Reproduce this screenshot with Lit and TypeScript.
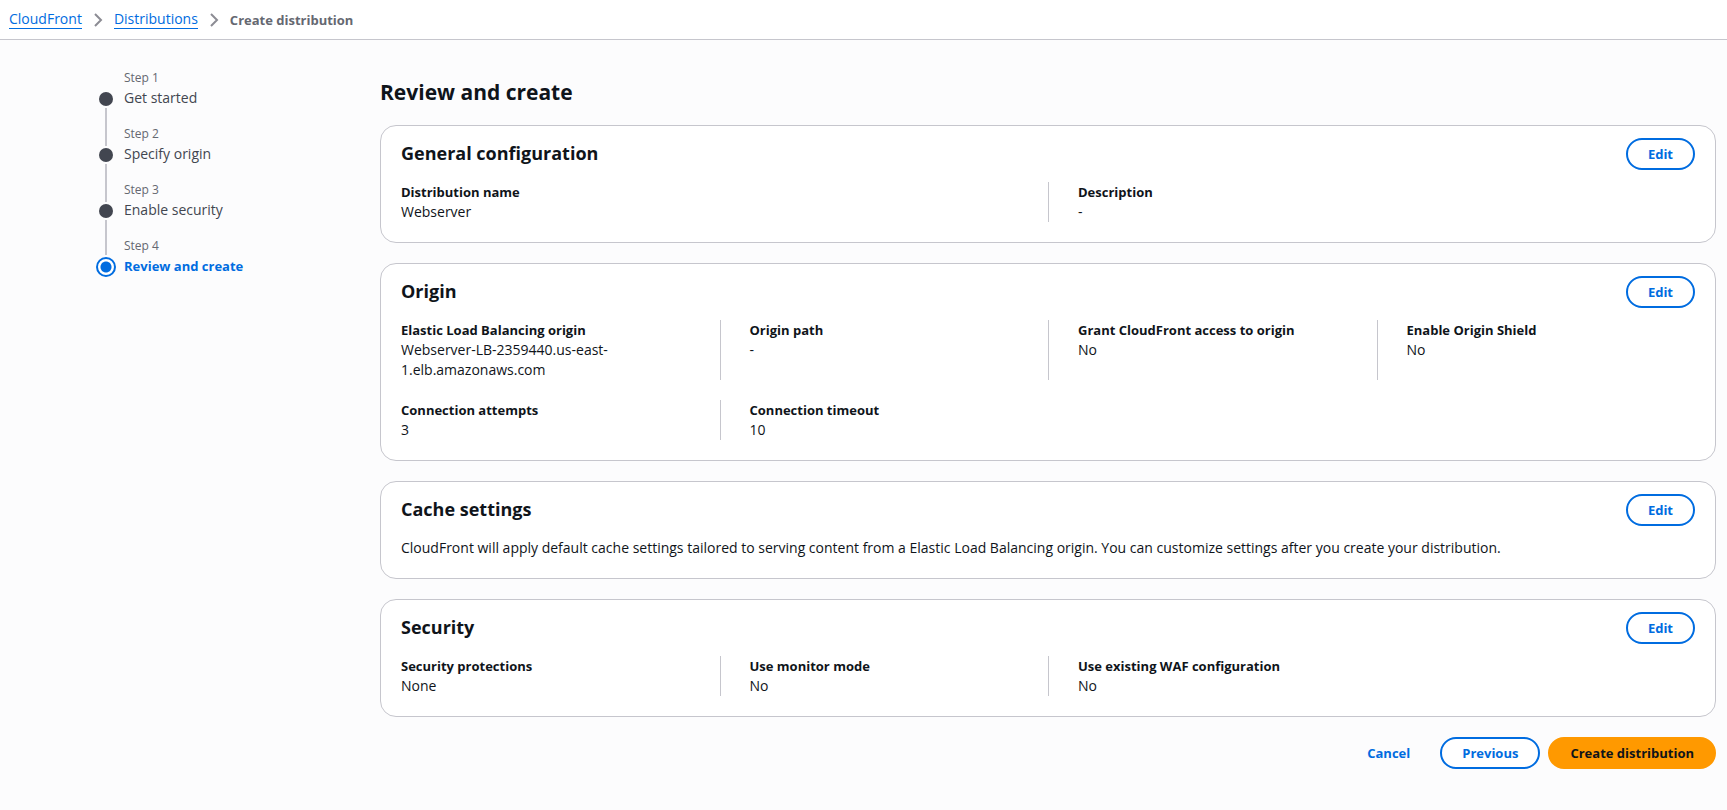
import { LitElement, html, css, nothing } from "lit";
import { customElement, property } from "lit/decorators.js";
import { classMap } from "lit/directives/class-map.js";

interface Field {
  label: string;
  value: string;
}

interface Section {
  title: string;
  columns?: 2 | 4;
  fields?: Field[];
  text?: string;
}

const STEPS = ["Get started", "Specify origin", "Enable security", "Review and create"];

const SECTIONS: Section[] = [
  {
    title: "General configuration",
    columns: 2,
    fields: [
      { label: "Distribution name", value: "Webserver" },
      { label: "Description", value: "-" },
    ],
  },
  {
    title: "Origin",
    columns: 4,
    fields: [
      { label: "Elastic Load Balancing origin", value: "Webserver-LB-2359440.us-east-1.elb.amazonaws.com" },
      { label: "Origin path", value: "-" },
      { label: "Grant CloudFront access to origin", value: "No" },
      { label: "Enable Origin Shield", value: "No" },
      { label: "Connection attempts", value: "3" },
      { label: "Connection timeout", value: "10" },
    ],
  },
  {
    title: "Cache settings",
    text: "CloudFront will apply default cache settings tailored to serving content from a Elastic Load Balancing origin. You can customize settings after you create your distribution.",
  },
  {
    title: "Security",
    columns: 4,
    fields: [
      { label: "Security protections", value: "None" },
      { label: "Use monitor mode", value: "No" },
      { label: "Use existing WAF configuration", value: "No" },
    ],
  },
];

const buttonStyles = css`
  .button {
    box-sizing: border-box;
    height: 32px;
    padding: 0 20px;
    border: 2px solid #006ce0;
    border-radius: 20px;
    background: #ffffff;
    color: #006ce0;
    font: 700 13px/20px "Open Sans", "Noto Sans", sans-serif;
    white-space: nowrap;
    cursor: pointer;
  }
  .button.link {
    border-color: transparent;
    background: transparent;
  }
  .button.primary {
    border-color: #ff9900;
    background: #ff9900;
    color: #0f141a;
  }
`;

@customElement("review-card")
export class ReviewCard extends LitElement {
  @property({ attribute: false }) section!: Section;

  static styles = [
    buttonStyles,
    css`
      :host {
        display: block;
      }
      .card {
        padding: 12px 20px 20px;
        border: 1px solid #c6c6cd;
        border-radius: 16px;
        background: #ffffff;
      }
      .head {
        display: flex;
        justify-content: space-between;
        align-items: flex-start;
        margin-bottom: 12px;
      }
      .title {
        margin: 0;
        padding-top: 3px;
        font-size: 18px;
        line-height: 24px;
        font-weight: 700;
      }
      .text {
        margin: 0;
      }
      .fields {
        display: grid;
        row-gap: 20px;
        margin: 0 -10px;
      }
      .two {
        grid-template-columns: repeat(2, 1fr);
      }
      .four {
        grid-template-columns: repeat(4, 1fr);
      }
      .field {
        min-width: 0;
        padding: 0 20px 0 29px;
        border-left: 1px solid #c6c6cd;
      }
      .two .field:nth-child(2n + 1),
      .four .field:nth-child(4n + 1) {
        padding-left: 10px;
        border-left: 0;
      }
      .label {
        font-size: 13px;
        font-weight: 700;
      }
      .value {
        margin: 0;
        overflow-wrap: break-word;
      }
    `,
  ];

  render() {
    const { title, columns, fields, text } = this.section;
    return html`
      <section class="card" aria-label=${title}>
        <div class="head">
          <h2 class="title">${title}</h2>
          <button class="button" type="button">Edit</button>
        </div>
        ${text ? html`<p class="text">${text}</p>` : nothing}
        ${fields
          ? html`<dl class=${classMap({ fields: true, two: columns === 2, four: columns === 4 })}>
              ${fields.map(
                (f) => html`<div class="field">
                  <dt class="label">${f.label}</dt>
                  <dd class="value">${f.value}</dd>
                </div>`,
              )}
            </dl>`
          : nothing}
      </section>
    `;
  }
}

@customElement("app-root")
export class AppRoot extends LitElement {
  static styles = [
    buttonStyles,
    css`
      :host {
        display: block;
        box-sizing: border-box;
        min-height: 100vh;
        background: #fcfcfd;
        color: #0f141a;
        font: 14px/20px "Open Sans", "Noto Sans", sans-serif;
      }
      .crumbs {
        padding: 9px;
        border-bottom: 1px solid #c6c6cd;
        background: #ffffff;
      }
      .crumb-list {
        display: flex;
        align-items: center;
        gap: 8px;
        height: 21px;
        margin: 0;
        padding: 0;
        list-style: none;
      }
      .crumb {
        display: flex;
        align-items: center;
        gap: 8px;
      }
      .crumb-link {
        color: #006ce0;
        text-decoration: none;
        border-bottom: 1px solid #006ce0;
        line-height: 18px;
      }
      .current {
        color: #656871;
        font-size: 13px;
        line-height: 18px;
        font-weight: 700;
      }
      .chevron {
        width: 16px;
        height: 16px;
        fill: none;
        stroke: #8c8c94;
        stroke-width: 2;
      }
      .layout {
        display: grid;
        grid-template-columns: 264px minmax(0, 1fr);
        gap: 20px;
        padding: 29px 11px 41px 96px;
      }
      .steps {
        margin: 0;
        padding: 0;
        list-style: none;
      }
      .step {
        display: grid;
        grid-template-columns: 20px 1fr;
        grid-template-rows: 20px 20px 16px;
        column-gap: 8px;
        justify-items: start;
        line-height: 18px;
      }
      .step-number {
        grid-area: 1 / 2;
        color: #656871;
        font-size: 12px;
      }
      .step-link {
        grid-area: 2 / 2;
        color: #424650;
        text-decoration: none;
      }
      .marker {
        grid-area: 2 / 1;
        place-self: center;
        width: 14px;
        height: 14px;
        border-radius: 50%;
        background: #424650;
      }
      .line {
        justify-self: center;
        width: 2px;
        background: #c6c6cd;
      }
      .before {
        grid-area: 1 / 1;
        margin-bottom: -1px;
      }
      .after {
        grid-area: 3 / 1;
        margin-top: -1px;
      }
      .active .step-link {
        color: #006ce0;
        font-size: 13px;
        font-weight: 700;
      }
      .active .marker {
        box-sizing: border-box;
        width: 20px;
        height: 20px;
        border: 2px solid #006ce0;
        background: radial-gradient(circle, #006ce0 5px, #ffffff 6px);
      }
      .active .before {
        margin-bottom: 2px;
      }
      .page-title {
        margin: 0 0 18px;
        padding-top: 8px;
        font-size: 21px;
        line-height: 30px;
        font-weight: 700;
      }
      .cards {
        display: grid;
        gap: 20px;
      }
      .actions {
        display: flex;
        justify-content: flex-end;
        gap: 8px;
        margin-top: 20px;
      }
    `,
  ];

  private chevron() {
    return html`<svg class="chevron" viewBox="0 0 16 16" aria-hidden="true"><path d="M5 2l6 6-6 6" /></svg>`;
  }

  render() {
    return html`
      <nav class="crumbs" aria-label="Breadcrumbs">
        <ol class="crumb-list">
          <li class="crumb"><a class="crumb-link" href="#cloudfront">CloudFront</a>${this.chevron()}</li>
          <li class="crumb"><a class="crumb-link" href="#distributions">Distributions</a>${this.chevron()}</li>
          <li class="crumb current" aria-current="page">Create distribution</li>
        </ol>
      </nav>
      <div class="layout">
        <nav aria-label="Steps">
          <ol class="steps">
            ${STEPS.map((name, i) => {
              const active = i === STEPS.length - 1;
              return html`<li class=${classMap({ step: true, active })}>
                ${i > 0 ? html`<span class="line before"></span>` : nothing}
                <span class="step-number">Step ${i + 1}</span>
                <span class="marker"></span>
                <a class="step-link" href="#step-${i + 1}" aria-current=${active ? "step" : "false"}>${name}</a>
                ${active ? nothing : html`<span class="line after"></span>`}
              </li>`;
            })}
          </ol>
        </nav>
        <main>
          <h1 class="page-title">Review and create</h1>
          <div class="cards">
            ${SECTIONS.map((s) => html`<review-card .section=${s}></review-card>`)}
          </div>
          <div class="actions">
            <button class="button link" type="button">Cancel</button>
            <button class="button" type="button">Previous</button>
            <button class="button primary" type="button">Create distribution</button>
          </div>
        </main>
      </div>
    `;
  }
}
